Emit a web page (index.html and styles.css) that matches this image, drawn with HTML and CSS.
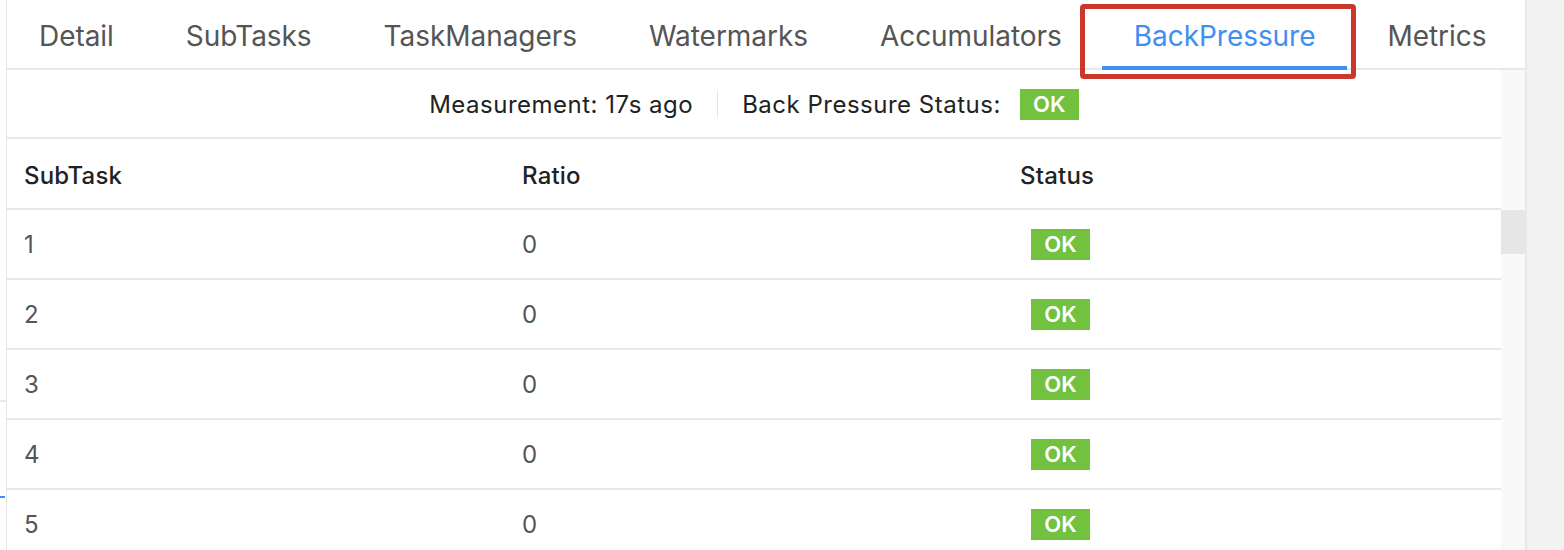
FILE: index.html
```html
<!DOCTYPE html>
<html>
<head>
<meta charset="utf-8">
<link rel="stylesheet" href="styles.css">
</head>
<body>
<div class="page">
  <div class="left-strip">
    <div class="ls-gray"></div>
    <div class="ls-blue"></div>
  </div>
  <div class="panel">
    <div class="tabs">
      <div class="tab">Detail</div>
      <div class="tab">SubTasks</div>
      <div class="tab">TaskManagers</div>
      <div class="tab">Watermarks</div>
      <div class="tab">Accumulators</div>
      <div class="tab active">BackPressure</div>
      <div class="tab">Metrics</div>
    </div>
    <div class="body">
      <div class="content">
        <div class="info">
          <span class="info-text">Measurement: 17s ago</span>
          <span class="divider"></span>
          <span class="info-text">Back Pressure Status:</span>
          <span class="badge info-badge">OK</span>
        </div>
        <table class="table">
          <thead>
            <tr><th>SubTask</th><th>Ratio</th><th>Status</th></tr>
          </thead>
          <tbody>
            <tr><td>1</td><td>0</td><td><span class="badge row-badge">OK</span></td></tr>
            <tr><td>2</td><td>0</td><td><span class="badge row-badge">OK</span></td></tr>
            <tr><td>3</td><td>0</td><td><span class="badge row-badge">OK</span></td></tr>
            <tr><td>4</td><td>0</td><td><span class="badge row-badge">OK</span></td></tr>
            <tr><td>5</td><td>0</td><td><span class="badge row-badge">OK</span></td></tr>
          </tbody>
        </table>
      </div>
      <div class="scrollbar"><div class="thumb"></div></div>
    </div>
  </div>
  <div class="outer-right"></div>
  <div class="highlight"></div>
</div>
</body>
</html>
```

FILE: styles.css
```css
* { box-sizing: border-box; }
html, body { margin: 0; padding: 0; background: #fff; }
body { font-family: Inter, "Noto Sans", sans-serif; }

.page {
  position: relative;
  display: flex;
  height: 550px;
  overflow: hidden;
}

.left-strip {
  width: 7px;
  flex: none;
  border-right: 1px solid #e6e6e6;
  padding-top: 400px;
}
.ls-gray { height: 2px; background: #e8e8e8; }
.ls-blue { height: 2px; width: 5px; margin-top: 94px; background: #3f8ef3; }

.panel {
  width: 1520px;
  flex: none;
  border-right: 2px solid #e8e8e8;
  display: flex;
  flex-direction: column;
}

.tabs {
  height: 70px;
  flex: none;
  display: flex;
  align-items: stretch;
  gap: 8px;
  border-bottom: 2px solid #e8e8e8;
}
.tab {
  padding: 5px 32px 0;
  font-size: 28px;
  color: #555;
  display: flex;
  align-items: center;
  border-bottom: 4px solid transparent;
  margin-bottom: -2px;
  letter-spacing: -0.05px;
}
.tab.active {
  color: #3f8ef3;
  border-bottom-color: #3f8ef3;
}

.body {
  flex: 1;
  display: flex;
  min-height: 0;
}
.content {
  flex: 1;
  min-width: 0;
}
.scrollbar {
  width: 24px;
  flex: none;
  background: #f9f9f9;
  padding-top: 140px;
}
.thumb {
  height: 44px;
  background: #e6e6e6;
}

.info {
  height: 69px;
  border-bottom: 2px solid #e8e8e8;
  display: flex;
  align-items: center;
  justify-content: center;
  padding-top: 1px;
}
.info-text {
  font-size: 24px;
  color: #222;
  letter-spacing: 0.5px;
}
.divider {
  width: 1px;
  height: 28px;
  background: #e6e6e6;
  margin: 0 24px;
}

.badge {
  display: inline-flex;
  align-items: center;
  justify-content: center;
  background: #72c13f;
  color: #fff;
  font-weight: 600;
  font-size: 22px;
  width: 59px;
  height: 31px;
}
.info-badge { margin-left: 19px; }
.row-badge { margin-left: 11px; }

.table {
  width: 100%;
  border-collapse: collapse;
  table-layout: fixed;
}
.table th, .table td {
  height: 70px;
  padding: 0 0 0 17px;
  text-align: left;
  border-bottom: 2px solid #e8e8e8;
  vertical-align: middle;
}
.table th {
  font-weight: 500;
  font-size: 24px;
  color: #222;
  letter-spacing: 0.2px;
  padding-top: 3px;
}
.table td {
  font-size: 24px;
  color: #555;
}

.outer-right {
  flex: 1;
  background: #f2f2f2;
}

.highlight {
  position: absolute;
  left: 1080px;
  top: 4px;
  width: 276px;
  height: 75px;
  border: 5px solid #c9382a;
  border-radius: 4px;
}
```
